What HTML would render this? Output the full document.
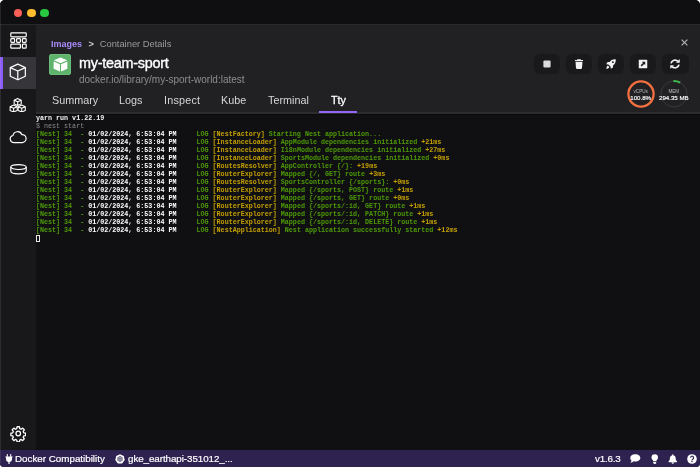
<!DOCTYPE html>
<html lang="en">
<head>
<meta charset="utf-8">
<title>Container Details</title>
<style>
*{box-sizing:border-box;margin:0;padding:0}
html,body{width:700px;height:467px;overflow:hidden;background:#fff}
body{font-family:"Liberation Sans",sans-serif;color:#fff;position:relative}
.win{position:absolute;left:0;top:0;width:700px;height:467px;background:#101012;border-radius:5px 5px 4px 4px;overflow:hidden;will-change:transform}
.titlebar{position:absolute;left:0;top:0;width:700px;height:24px;background:#0f0f11}
.tl{position:absolute;top:8.8px;width:8.6px;height:8.6px;border-radius:50%}
.tbline{position:absolute;left:0;top:24px;width:700px;height:1px;background:#29292b}
.sidebar{position:absolute;left:0;top:25px;width:36px;height:425px;background:#18181a}
.sel{position:absolute;left:0;top:31.600px;width:36px;height:32.500px;background:#35353a}
.sel i{position:absolute;left:0;top:0;width:3px;height:32.500px;background:#8b5cf6}
.sb svg{position:absolute}
.header{position:absolute;left:36px;top:25px;width:664px;height:87px;background:#212123}
.hline{position:absolute;left:36px;top:112px;width:664px;height:2px;background:#2d2d30}
.crumb{position:absolute;left:15px;top:13px;font-size:9.6px;line-height:12px;white-space:nowrap;color:#9a9a9f}
.crumb b{color:#a78bfa;font-weight:bold;font-size:9px}
.crumb b,.crumb span,.crumb em{position:absolute;top:0;font-style:normal}
.crumb span{left:37.500px;color:#d0d0d4;font-weight:bold;font-size:9.200px}
.crumb em{left:48.700px;font-size:9.350px}
.imgicon{position:absolute;left:13.400px;top:28.800px;width:21.500px;height:21.500px;border-radius:3px;background:#5fb36c;box-shadow:inset 0 0 0 1px #6bbd78}
.title{position:absolute;left:43px;top:28px;font-size:14.4px;line-height:20px;font-weight:normal;color:#fff;white-space:nowrap;letter-spacing:-0.25px;-webkit-text-stroke:0.35px #fff}
.sub{position:absolute;left:43px;top:47.700px;font-size:10px;line-height:13px;color:#8d8d92;white-space:nowrap}
.tabs{position:absolute;left:0;top:68.3px;height:18px;font-size:10.8px;line-height:14px;color:#d6d6da;white-space:nowrap}
.tabs span{position:absolute;top:0}
.tabs .act{color:#fff;-webkit-text-stroke:0.3px #fff}
.tabline{position:absolute;left:319.3px;top:111px;width:37.8px;height:2px;background:#9466f7;z-index:5}
.btn{position:absolute;top:29px;width:26.400px;height:19.500px;border-radius:6px;background:#19191b}
.btn svg{position:absolute;left:50%;top:50%;transform:translate(-50%,-50%)}
.close{position:absolute;left:645.200px;top:14.300px}
.gauge{position:absolute;top:55.400px;width:28px;height:28px;text-align:center}
.gauge svg{position:absolute;left:0;top:0}
.gauge .l{position:absolute;left:-10px;width:48px;top:8.5px;font-size:4.6px;line-height:5px;color:#b9b9be}
.gauge .v{position:absolute;left:-10px;width:48px;top:13.500px;font-size:6.100px;line-height:7px;color:#fff;-webkit-text-stroke:0.15px #fff}
.term{position:absolute;left:36px;top:114px;width:664px;height:336px;box-shadow:inset 0 1px 0 #0a0a0c;background:#101012;font-family:"Liberation Mono",monospace;font-size:6.700px;line-height:8px;font-weight:bold;white-space:pre;color:#fff;padding-top:0;margin-top:0}
.term .g{color:#4e9a06}
.term .y{color:#c4a000}
.term .d{color:#8a8a8a;font-weight:normal}
.term .w{color:#f2f2f2}
.cursor{display:inline-block;width:4px;height:7.500px;border:1px solid #e8e8e8;vertical-align:top;position:relative;top:0.500px;left:0.300px}
.ledge{position:absolute;left:0;top:4px;width:1px;height:459px;background:rgba(255,255,255,0.09);z-index:9}
.status{position:absolute;left:0;top:450px;width:700px;height:17px;background:#2e2250;font-size:9.8px;line-height:12px;color:#fff;white-space:nowrap}
.status span{position:absolute;top:2.600px;-webkit-text-stroke:0.2px #fff}
.status svg{position:absolute}
</style>
</head>
<body>
<div class="win">
  <div class="ledge"></div>
  <div class="titlebar">
    <div class="tl" style="left:13.7px;background:#fe5f57"></div>
    <div class="tl" style="left:27.1px;background:#febc2e"></div>
    <div class="tl" style="left:40.4px;background:#28c840"></div>
  </div>
  <div class="tbline"></div>

  <div class="sidebar sb">
    <div class="sel"><i></i></div>
    <!-- dashboard -->
    <svg style="left:9.5px;top:7px" width="17" height="17" viewBox="0 0 17 17" fill="none" stroke="#fff" stroke-width="1.2">
      <rect x="0.8" y="0.8" width="15.4" height="4" rx="0.8"/>
      <rect x="0.8" y="6.6" width="3.8" height="3.8" rx="0.8"/>
      <rect x="6.6" y="6.6" width="3.8" height="3.8" rx="0.8"/>
      <rect x="12.4" y="6.6" width="3.8" height="3.8" rx="0.8"/>
      <rect x="0.8" y="12.2" width="9.6" height="4" rx="0.8"/>
      <rect x="12.4" y="12.2" width="3.8" height="4" rx="0.8"/>
    </svg>
    <!-- cube -->
    <svg style="left:9.200px;top:38.400px" width="17.600" height="18" viewBox="0 0 18 18" fill="none" stroke="#fff" stroke-width="1.250" stroke-linejoin="round">
      <path d="M9 1 L16.700 4.500 V13.300 L9 17 L1.300 13.300 V4.500 Z"/>
      <path d="M1.300 4.500 L9 8 L16.700 4.500 M9 8 V17"/>
    </svg>
    <!-- cubes -->
    <svg style="left:9.300px;top:72.600px" width="17.400" height="14.700" viewBox="0 0 17 14.5" fill="none" stroke="#fff" stroke-width="1.05" stroke-linejoin="round">
      <path d="M8.5 0.6 L12 2.2 V5.800 L8.5 7.400 L5 5.800 V2.2 Z M5 2.2 L8.5 3.800 L12 2.200 M8.500 3.800 V7.400"/>
      <path d="M4.500 7 L8 8.600 V12.300 L4.500 13.900 L1 12.300 V8.600 Z M1 8.600 L4.500 10.200 L8 8.600 M4.500 10.200 V13.900"/>
      <path d="M12.500 7 L16 8.600 V12.300 L12.500 13.900 L9 12.300 V8.600 Z M9 8.600 L12.500 10.200 L16 8.600 M12.500 10.200 V13.900"/>
    </svg>
    <!-- cloud -->
    <svg style="left:9px;top:105px" width="18" height="14" viewBox="0 0 18 14" fill="none" stroke="#fff" stroke-width="1.2" stroke-linejoin="round">
      <path d="M4.6 12.6 A3.6 3.6 0 0 1 4 5.5 A4.6 4.6 0 0 1 12.8 4.6 A4 4 0 0 1 13.4 12.6 Z"/>
    </svg>
    <!-- disk -->
    <svg style="left:9.5px;top:139px" width="17" height="10.500" viewBox="0 0 17 10.500" fill="none" stroke="#fff" stroke-width="1.2">
      <ellipse cx="8.500" cy="3.100" rx="7.700" ry="2.400"/>
      <path d="M.8 3.100 V7.300 A7.700 2.500 0 0 0 16.200 7.300 V3.100"/>
    </svg>
    <!-- gear -->
    <svg style="left:9.500px;top:400.200px" width="16.500" height="17" viewBox="0 0 24 24" preserveAspectRatio="none" fill="none" stroke="#fff" stroke-width="1.9" stroke-linejoin="round">
      <path d="M10.3 2.5h3.4l.5 2.7 1.9.8 2.3-1.6 2.4 2.4-1.6 2.3.8 1.9 2.7.5v3.4l-2.7.5-.8 1.9 1.6 2.3-2.4 2.4-2.3-1.6-1.9.8-.5 2.7h-3.4l-.5-2.7-1.9-.8-2.3 1.6-2.4-2.4 1.6-2.3-.8-1.9-2.7-.5v-3.4l2.7-.5.8-1.9-1.6-2.3 2.4-2.4 2.3 1.6 1.9-.8z"/>
      <circle cx="12" cy="12" r="3.3"/>
    </svg>
  </div>

  <div class="header">
    <div class="crumb"><b id="c1">Images</b><span id="c2">&gt;</span><em id="c3">Container Details</em></div>
    <div class="imgicon">
      <svg width="21" height="21" viewBox="0 0 21.5 21.5" style="position:absolute;left:0.250px;top:0.250px">
        <path d="M10.75 3.6 L17.6 6.5 L10.75 9.4 L3.9 6.5 Z" fill="#fff"/>
        <path d="M3.7 7.6 L10.2 10.4 V18 L3.7 15 Z" fill="#fff"/>
        <path d="M17.8 7.6 L11.3 10.4 V18 L17.8 15 Z" fill="#fff"/>
      </svg>
    </div>
    <div class="title">my-team-sport</div>
    <div class="sub">docker.io/library/my-sport-world:latest</div>
    <div class="tabs">
      <span style="left:16px">Summary</span>
      <span style="left:83px">Logs</span>
      <span style="left:128px;letter-spacing:0.2px">Inspect</span>
      <span style="left:185px">Kube</span>
      <span style="left:232px">Terminal</span>
      <span class="act" style="left:295px">Tty</span>
    </div>

    <svg class="close" width="7" height="7" viewBox="0 0 7 7" stroke="#b4b4b8" stroke-width="1.150" fill="none"><path d="M0.6 0.6 L6.4 6.4 M6.4 0.6 L0.6 6.4"/></svg>

    <div class="btn" style="left:497.5px">
      <svg width="8" height="8" viewBox="0 0 8 8"><rect x="0.4" y="0.4" width="7.2" height="7.2" rx="1.100" fill="#dadada"/></svg>
    </div>
    <div class="btn" style="left:529.7px">
      <svg width="9" height="10" viewBox="0 0 9 10" fill="#f2f2f2"><path d="M3 0.2h3l.5.8H8.6v1.1H.4V1h2.1z M1 2.8h7l-.5 6.3a.9.9 0 0 1-.9.8H2.4a.9.9 0 0 1-.9-.8z"/></svg>
    </div>
    <div class="btn" style="left:561.9px">
      <svg width="10" height="10" viewBox="0 0 10 10" fill="#f2f2f2"><path d="M9.7.3C7.2 0 5 .9 3.6 3L1.6 3 .2 5.2l2.2.3 2.1 2.1.3 2.2L7 8.4l0-2C9.100 5 10 2.800 9.700.3z M6.900 2.300a.9.900 0 1 1 0 1.800.9.900 0 0 1 0-1.800z M1.600 6.800c.7-.2 1.400.5 1.600 1.600-.5.800-1.800 1.200-2.900 1.300.1-1.100.5-2.400 1.300-2.900z" fill-rule="evenodd"/></svg>
    </div>
    <div class="btn" style="left:594.1px">
      <svg width="9" height="9" viewBox="0 0 9 9"><rect x="0" y="0" width="9" height="9" rx="1" fill="#f2f2f2"/><path d="M3.4 2.300H6.700V5.600L5.600 4.500 3.200 6.900 2.100 5.800 4.500 3.400Z" fill="#19191b"/></svg>
    </div>
    <div class="btn" style="left:626.3px">
      <svg width="10.400" height="10.400" viewBox="0 0 10 10" fill="none" stroke="#f2f2f2" stroke-width="1.700"><path d="M1.200 4.400A3.900 3.900 0 0 1 7.800 2.400"/><path d="M8.800 5.600A3.900 3.900 0 0 1 2.200 7.600"/><path d="M9.600.2V3.800H6Z" fill="#f2f2f2" stroke="none"/><path d="M.4 9.800V6.200H4Z" fill="#f2f2f2" stroke="none"/></svg>
    </div>

    <div class="gauge" style="left:590.700px">
      <svg width="28" height="28" viewBox="0 0 28 28"><circle cx="14" cy="14" r="12.600" fill="none" stroke="#f4703f" stroke-width="2.300"/></svg>
      <div class="l">vCPUs</div><div class="v">100.8%</div>
    </div>
    <div class="gauge" style="left:623.800px">
      <svg width="28" height="28" viewBox="0 0 28 28"><circle cx="14" cy="14" r="13" fill="none" stroke="#3c3c40" stroke-width="0.900"/><path d="M13.400 1.100A12.900 12.900 0 0 1 20.200 2.700" fill="none" stroke="#3fb950" stroke-width="2"/></svg>
      <div class="l">MEM</div><div class="v">294.35 MB</div>
    </div>
  </div>
  <div class="hline"></div>
  <div class="tabline"></div>

  <div class="term"><span class="w">yarn run v1.22.19</span>
<span class="d">$ nest start</span>
<span class="g">[Nest] 34  - </span>01/02/2024, 6:53:04 PM     <span class="g">LOG</span> <span class="y">[NestFactory]</span> <span class="g">Starting Nest application...</span>
<span class="g">[Nest] 34  - </span>01/02/2024, 6:53:04 PM     <span class="g">LOG</span> <span class="y">[InstanceLoader]</span> <span class="g">AppModule dependencies initialized</span> <span class="y">+21ms</span>
<span class="g">[Nest] 34  - </span>01/02/2024, 6:53:04 PM     <span class="g">LOG</span> <span class="y">[InstanceLoader]</span> <span class="g">I18nModule dependencies initialized</span> <span class="y">+27ms</span>
<span class="g">[Nest] 34  - </span>01/02/2024, 6:53:04 PM     <span class="g">LOG</span> <span class="y">[InstanceLoader]</span> <span class="g">SportsModule dependencies initialized</span> <span class="y">+0ms</span>
<span class="g">[Nest] 34  - </span>01/02/2024, 6:53:04 PM     <span class="g">LOG</span> <span class="y">[RoutesResolver]</span> <span class="g">AppController {/}:</span> <span class="y">+19ms</span>
<span class="g">[Nest] 34  - </span>01/02/2024, 6:53:04 PM     <span class="g">LOG</span> <span class="y">[RouterExplorer]</span> <span class="g">Mapped {/, GET} route</span> <span class="y">+3ms</span>
<span class="g">[Nest] 34  - </span>01/02/2024, 6:53:04 PM     <span class="g">LOG</span> <span class="y">[RoutesResolver]</span> <span class="g">SportsController {/sports}:</span> <span class="y">+0ms</span>
<span class="g">[Nest] 34  - </span>01/02/2024, 6:53:04 PM     <span class="g">LOG</span> <span class="y">[RouterExplorer]</span> <span class="g">Mapped {/sports, POST} route</span> <span class="y">+1ms</span>
<span class="g">[Nest] 34  - </span>01/02/2024, 6:53:04 PM     <span class="g">LOG</span> <span class="y">[RouterExplorer]</span> <span class="g">Mapped {/sports, GET} route</span> <span class="y">+0ms</span>
<span class="g">[Nest] 34  - </span>01/02/2024, 6:53:04 PM     <span class="g">LOG</span> <span class="y">[RouterExplorer]</span> <span class="g">Mapped {/sports/:id, GET} route</span> <span class="y">+1ms</span>
<span class="g">[Nest] 34  - </span>01/02/2024, 6:53:04 PM     <span class="g">LOG</span> <span class="y">[RouterExplorer]</span> <span class="g">Mapped {/sports/:id, PATCH} route</span> <span class="y">+1ms</span>
<span class="g">[Nest] 34  - </span>01/02/2024, 6:53:04 PM     <span class="g">LOG</span> <span class="y">[RouterExplorer]</span> <span class="g">Mapped {/sports/:id, DELETE} route</span> <span class="y">+1ms</span>
<span class="g">[Nest] 34  - </span>01/02/2024, 6:53:04 PM     <span class="g">LOG</span> <span class="y">[NestApplication]</span> <span class="g">Nest application successfully started</span> <span class="y">+12ms</span>
<span class="cursor"></span></div>

  <div class="status">
    <svg style="left:5px;top:4px" width="8" height="10" viewBox="0 0 8 10" fill="#fff"><path d="M1.800 0h1v2.600h-1z M5.200 0h1v2.600h-1z M.4 2.600h7.200v1H7v1.600A3 3 0 0 1 4.600 8.100V10H3.400V8.100A3 3 0 0 1 1 5.200V3.600H.4z"/></svg>
    <span style="left:15px">Docker Compatibility</span>
    <svg style="left:115.300px;top:3.700px" width="10" height="10" viewBox="0 0 10 10"><path d="M5 .2 8.800 2 9.700 6.100 7.100 9.400H2.900L.3 6.100 1.200 2Z" fill="#fff"/><circle cx="5" cy="5" r="2.300" fill="none" stroke="#2e2250" stroke-width=".7"/><path d="M5 2.200v5.600M2.600 3.600l4.800 2.800M7.400 3.600 2.600 6.400" stroke="#2e2250" stroke-width=".5"/></svg>
    <span style="left:128px;letter-spacing:-0.070px">gke_earthapi-351012_...</span>
    <span style="left:595px;letter-spacing:-0.200px">v1.6.3</span>
    <svg style="left:630.200px;top:4.100px" width="10.600" height="9" viewBox="0 0 12 10" fill="#fff"><path d="M6 .3c3.100 0 5.700 1.800 5.700 4.100S9.100 8.500 6 8.500c-.7 0-1.400-.1-2-.3C3.200 9 2 9.600.4 9.700c.7-.7 1.200-1.500 1.300-2.300C.8 6.600.3 5.600.3 4.400.3 2.100 2.900.3 6 .3z"/></svg>
    <svg style="left:650.500px;top:3.600px" width="7.500" height="10.500" viewBox="0 0 8 12" fill="#fff"><path d="M4 .2a3.700 3.700 0 0 1 3.700 3.700c0 1.300-.7 2.100-1.200 2.800-.4.500-.6 1-.7 1.600H2.200c-.1-.6-.3-1.100-.7-1.600C1 6 .3 5.200.3 3.900A3.700 3.700 0 0 1 4 .2z M2.300 9h3.400v1.300c0 .5-.4.900-.9.900h-.2l-.3.500h-.6l-.3-.5h-.2c-.5 0-.9-.4-.9-.9z"/></svg>
    <svg style="left:667.800px;top:4px" width="9.600" height="10" viewBox="0 0 11 11" fill="#fff"><path d="M5.500 0a.7.700 0 0 1 .7.700v.4a3.300 3.300 0 0 1 2.600 3.200c0 2 .5 3 1.500 3.900.3.300.1.900-.4.900H1.100c-.5 0-.7-.6-.4-.9 1-.9 1.500-1.900 1.500-3.900A3.300 3.300 0 0 1 4.800 1.100V.7A.7.700 0 0 1 5.500 0z M4.100 9.600h2.800a1.400 1.400 0 0 1-2.800 0z"/></svg>
    <svg style="left:687px;top:4px" width="10" height="10" viewBox="0 0 11 11"><circle cx="5.500" cy="5.500" r="5.300" fill="#fff"/><path d="M3.900 4.200a1.700 1.700 0 1 1 2.400 1.500c-.5.300-.8.500-.8 1.100" fill="none" stroke="#2e2250" stroke-width="1.300"/><circle cx="5.500" cy="8.300" r=".8" fill="#2e2250"/></svg>
  </div>
</div>
</body>
</html>
